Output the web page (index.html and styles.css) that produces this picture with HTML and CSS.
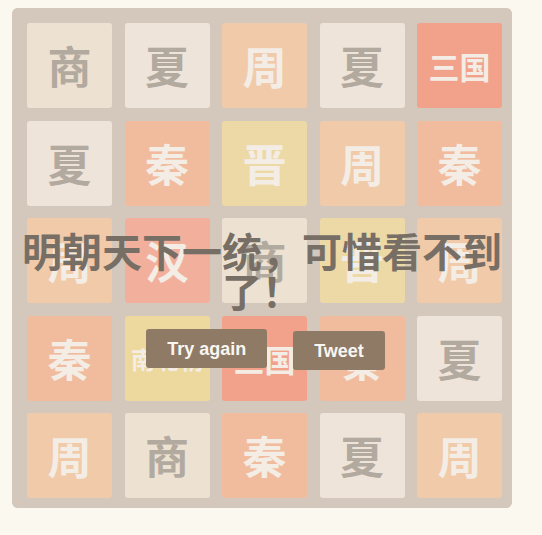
FILE: index.html
```html
<!DOCTYPE html>
<html lang="zh">
<head>
<meta charset="utf-8">
<title>2048 朝代版</title>
<link rel="stylesheet" href="styles.css">
</head>
<body>
<div class="game">
  <div class="grid">
    <div class="tile t4">商</div>
    <div class="tile t2">夏</div>
    <div class="tile t8">周</div>
    <div class="tile t2">夏</div>
    <div class="tile t64 small">三国</div>

    <div class="tile t2">夏</div>
    <div class="tile t16">秦</div>
    <div class="tile t128">晋</div>
    <div class="tile t8">周</div>
    <div class="tile t16">秦</div>

    <div class="tile t8">周</div>
    <div class="tile t32">汉</div>
    <div class="tile t4">商</div>
    <div class="tile t128">晋</div>
    <div class="tile t8">周</div>

    <div class="tile t16">秦</div>
    <div class="tile t256 tiny">南北朝</div>
    <div class="tile t64 small">三国</div>
    <div class="tile t16">秦</div>
    <div class="tile t2">夏</div>

    <div class="tile t8">周</div>
    <div class="tile t4">商</div>
    <div class="tile t16">秦</div>
    <div class="tile t2">夏</div>
    <div class="tile t8">周</div>
  </div>
  <div class="message">
    <p class="message-text">明朝天下一统，可惜看不到了！</p>
    <div class="lower">
      <a class="button retry">Try again</a><a class="button tweet">Tweet</a>
    </div>
  </div>
</div>
</body>
</html>
```

FILE: styles.css
```css
html, body {
  margin: 0;
  padding: 0;
  background: #faf8ef;
}
body {
  padding: 8px 0 0 12px;
  font-family: "Noto Sans CJK SC", "Liberation Sans", sans-serif;
}
.game {
  position: relative;
  width: 500px;
  height: 500px;
  background: #bbada0;
  border-radius: 6px;
  box-sizing: border-box;
}
.grid {
  display: grid;
  grid-template-columns: repeat(5, 85px);
  grid-template-rows: repeat(5, 85px);
  gap: 12.5px;
  padding: 15px 10px 10px 15px;
}
.tile {
  border-radius: 3px;
  background: #eee4da;
  color: #776e65;
  font-weight: bold;
  font-size: 44px;
  line-height: 85px;
  text-align: center;
  white-space: nowrap;
  overflow: hidden;
}
.tile.small { font-size: 31px; }
.tile.tiny { font-size: 24px; }
.t2 { background: #eee4da; color: #776e65; }
.t4 { background: #ede0c8; color: #776e65; }
.t8 { background: #f2b179; color: #f9f6f2; }
.t16 { background: #f59563; color: #f9f6f2; }
.t32 { background: #f67c5f; color: #f9f6f2; }
.t64 { background: #f65e3b; color: #f9f6f2; }
.t128 { background: #edcf72; color: #f9f6f2; }
.t256 { background: #edcc61; color: #f9f6f2; }

.message {
  position: absolute;
  top: 0;
  left: 0;
  right: 0;
  bottom: 0;
  background: rgba(238, 228, 218, 0.5);
  border-radius: 6px;
  text-align: center;
}
.message-text {
  margin: 222px 0 0;
  font-size: 40px;
  line-height: 40px;
  font-weight: bold;
  color: #776e65;
}
.lower {
  margin-top: 19px;
  display: flex;
  justify-content: center;
  align-items: flex-start;
  gap: 26px;
  padding-left: 7px;
}
.button {
  display: block;
  background: #8f7a66;
  color: #f9f6f2;
  border-radius: 3px;
  padding: 0 21px;
  height: 39px;
  line-height: 40px;
  font-family: "Liberation Sans", sans-serif;
  font-weight: bold;
  font-size: 18px;
  text-decoration: none;
}
.tweet { margin-top: 2px; }
```
